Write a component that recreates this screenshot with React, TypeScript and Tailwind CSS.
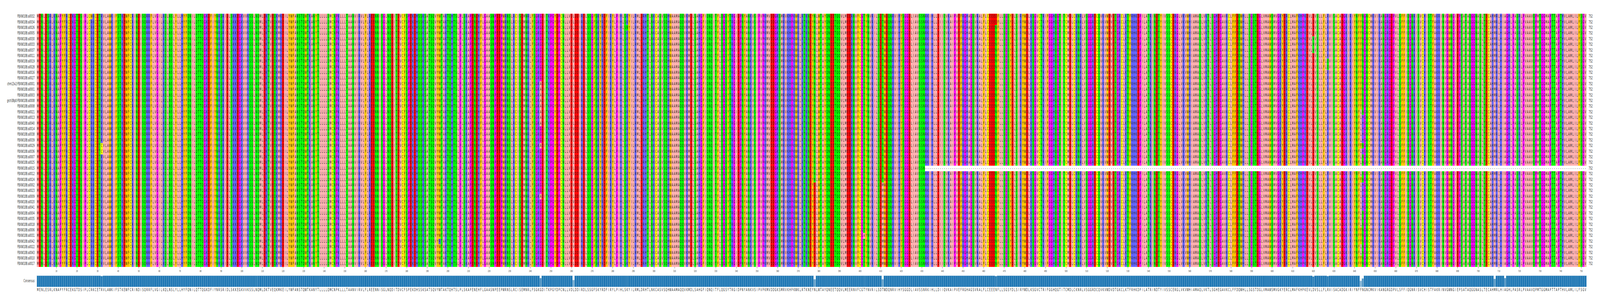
import React from 'react'

const labels = ['FBXW10B:a0032','FBXW10B:a0034','FBXW10B:a0026','FBXW10B:a0005','FBXW10B:a0030','FBXW10B:a0033','FBXW10B:a0037','FBXW10B:a0011','FBXW10B:a0019','FBXW10B:a0028','FBXW10B:a0016','FBXW10B:a0027','chm13v2:FBXW10B:a0001','FBXW10B:a0001','FBXW10B:a0003','grch38p0:FBXW10B:a0008','FBXW10B:a0008','FBXW10B:a0021','FBXW10B:a0013','FBXW10B:a0040','FBXW10B:a0014','FBXW10B:a0038','FBXW10B:a0039','FBXW10B:a0029','FBXW10B:a0036','FBXW10B:a0007','FBXW10B:a0025','FBXW10B:a0015','FBXW10B:a0012','FBXW10B:a0024','FBXW10B:a0002','FBXW10B:a0023','FBXW10B:a0009','FBXW10B:a0020','FBXW10B:a0041','FBXW10B:a0004','FBXW10B:a0035','FBXW10B:a0018','FBXW10B:a0006','FBXW10B:a0031','FBXW10B:a0042','FBXW10B:a0022','FBXW10B:a0043','FBXW10B:a0010','FBXW10B:a0017']

const consensus =
  'MENLESRLKNAPYFRCEKGTDSIPLCRKCETRVLAWKIFSTKEWFCRINDISQRRFLVGILKQLNSLYLLHYFQNILQTTQGKDFIYNRSRIDLSKKEGKVVKSSLNQ' +
  'MLDKTVEQKMKEILYWFANSTQWTKANYTLLLLQMCNPKLLLTAANVIRVLFLREENNISGLNQDITDVCFSPEKDHSSKSATSQVYWTAKTQHTSLPLSKAPENEHF' +
  'LGAASNPEEPWRNSLRCISEMNRLFSGKGDITKPGYDPCNLLVDLDDIRDLSSGFSKYRDFIRYLPIHLSKYILRMLDRHTLNKCASVSQHWAAMAQQVKMDLSAHG' +
  'FIQNQITFLQGSYTRGIDPNYANKVSIPVPKMVDDGKSMRVKHPKWKLRTKNEYNLWTAYQNEETQQVLMEERNVFCGTYNVRILSDTWDQNRVIHYSGGDLIAVSSN' +
  'RKIHLLDIIQVKAIPVEFRGHAGSVRALFLCEEENFLLSGSYDLSIRYWDLKSGVCTRIFGGHQGTITCMDLCKNRLVSGGRDCQVKVWDVDTGKCLKTFRHKDPIL' +
  'ATRINDTYIVSSCERGLVKVWHIAMAQLVKTLSGHEGAVKCLFFDQWHLLSGSTDGLVMAWSMVGKYERCLMAFKHPKEVLDVSLLFLRVISACADGKIRIYNFFNG' +
  'NCMKVIKANGRGDPVLSFFIQGNRISVCHISTFAKRINVGWNGIEPSATAQGGNASLTECAHMRLHIAGHLPASRLPVAAVQPMTGGMAPTTAPTHVLAMLILFSGV'

const range = (a: number, b: number) => Array.from({ length: b - a + 1 }, (_, i) => a + i)

// column (1-based), residue, rows that carry it
const variants: [number, string, number[]][] = [
  [27, 'W', [0]],
  [32, 'C', [23, 24]],
  [107, 'S', [6]],
  [196, 'R', [40]],
  [245, 'A', [...range(12, 19), 23, 32]],
  [261, 'V', [4, 7, 8, 11, 20, 21, 28, 29, 30, 33, 34, 35, 36, 38, 39, 40, 41, 43]],
  [287, 'N', [2]],
  [378, 'D', range(30, 44)],
  [402, 'A', [39]],
  [411, 'M', range(30, 44)],
  [466, 'D', [0, 1]],
  [620, 'N', [4, 5, 6]],
  [627, 'Q', [8, 9]],
  [643, 'L', [...range(17, 22), 24, 25, 26, 28, ...range(30, 37), 41, 42]],
  [644, 'H', [...range(18, 22), 24, ...range(30, 34)]],
  [708, 'V', [10, 11, 15, 16, 19, 21, 22, 26, 30, 31, 32, 36]],
  [713, 'V', [14, 23, 28, 29, 33, 38, 39, 40, 41, 42]],
]

const rows = labels.map((_, r) => {
  const seq = consensus.split('')
  variants.forEach(([col, ch, rs]) => {
    if (rs.includes(r)) seq[col - 1] = ch
  })
  if (r === 27) for (let c = 431; c < seq.length; c++) seq[c] = '-'
  return seq
})

const identity = consensus.split('').map((ch, c) => {
  const present = rows.filter((s) => s[c] !== '-')
  return present.filter((s) => s[c] === ch).length / present.length
})

const bg: Record<string, string> = {
  A: 'bg-[#ffafaf]', V: 'bg-[#ffafaf]', L: 'bg-[#ffafaf]', I: 'bg-[#ffafaf]', M: 'bg-[#ffafaf]',
  F: 'bg-[#ffc800]', W: 'bg-[#ffc800]', Y: 'bg-[#ffc800]',
  K: 'bg-[#6464ff]', R: 'bg-[#6464ff]', H: 'bg-[#6464ff]',
  D: 'bg-[#ff0000]', E: 'bg-[#ff0000]',
  S: 'bg-[#00ff00]', T: 'bg-[#00ff00]', N: 'bg-[#00ff00]', Q: 'bg-[#00ff00]',
  P: 'bg-[#ff00ff]', G: 'bg-[#ff00ff]',
  C: 'bg-[#ffff00]',
  '-': 'bg-white',
}

const Row = ({ label, seq }: { label: string; seq: string[] }) => (
  <div className="flex h-[14.4px] items-center">
    <div className="w-[169px] shrink-0 whitespace-nowrap text-right text-[#222]">{label}</div>
    <div className="ml-[11px] flex h-full">
      {seq.map((ch, i) => (
        <div key={i} className={`flex h-full w-[10.08px] shrink-0 items-center justify-center ${bg[ch]}`}>
          {ch}
        </div>
      ))}
    </div>
    <div className="ml-[11px] text-[#222]">752</div>
  </div>
)

export default function App() {
  // the browser window can be narrower than the 7825px figure, squeeze the figure to fit it
  const fit = Math.min(1, window.innerWidth / 7825)

  return (
    <div className="h-[783px] w-full overflow-hidden bg-white">
      <div
        className="flex h-[783px] w-[7825px] origin-top-left flex-col bg-white pt-[35px] font-['DejaVu_Sans',sans-serif] text-[10px] leading-none text-[#111]"
        style={{ transform: `scaleX(${fit})` }}
      >
        {rows.map((seq, r) => (
          <Row key={r} label={labels[r]} seq={seq} />
        ))}

        {/* ruler */}
        <div className="flex h-[22px] pl-[180px]">
          {identity.map((_, i) => (
            <div key={i} className="flex w-[10.08px] shrink-0 flex-col items-center">
              {(i + 1) % 10 === 0 && (
                <>
                  <div className="h-[4.5px] w-px bg-[#333]" />
                  <div className="mt-[4px] whitespace-nowrap text-[7px] text-[#333]">{i + 1}</div>
                </>
              )}
            </div>
          ))}
        </div>

        {/* consensus identity bars */}
        <div className="flex h-[29px] items-center">
          <div className="w-[169px] shrink-0 text-right text-[#333]">Consensus</div>
          <div className="ml-[11px] flex h-full items-end">
            {identity.map((v, i) => (
              <div
                key={i}
                className="w-[10.08px] shrink-0 border-t border-r border-[#a4c8e1] bg-[#1f77b4] first:border-l"
                style={{ height: `${v * 100}%`, opacity: v === 1 ? 1 : v }}
              />
            ))}
          </div>
        </div>

        <div className="mt-[1px] flex h-[14.4px] items-center pl-[180px] text-[#222]">
          {consensus.split('').map((ch, i) => (
            <div key={i} className="flex w-[10.08px] shrink-0 justify-center">
              {ch}
            </div>
          ))}
        </div>
      </div>
    </div>
  )
}
